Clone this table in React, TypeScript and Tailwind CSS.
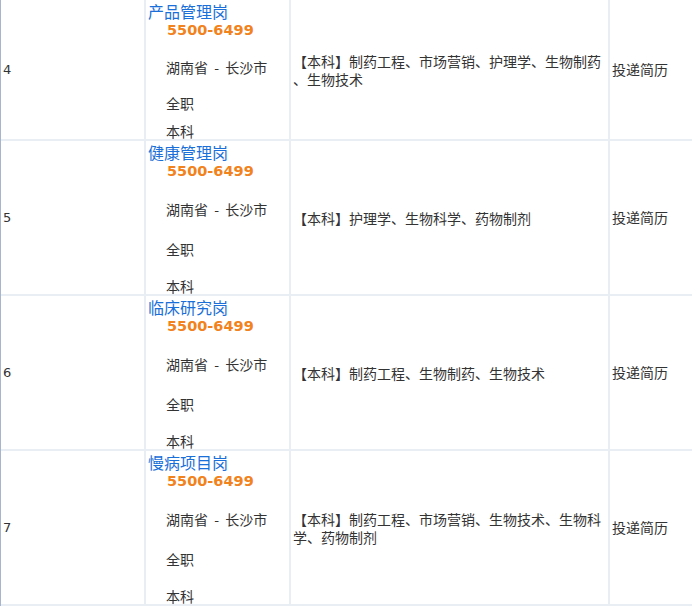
const jobs = [
  {
    no: 4,
    title: "产品管理岗",
    major: ["【本科】制药工程、市场营销、护理学、生物制药", "、生物技术"],
    // row 1 is cut short at the top of the shot, its lines sit tighter
    h: "h-[139px]",
    gaps: ["mt-0", "mt-[18px]", "mt-[17px]", "mt-[9px]"],
  },
  {
    no: 5,
    title: "健康管理岗",
    major: ["【本科】护理学、生物科学、药物制剂"],
    h: "h-[153px]",
    gaps: ["mt-0", "mt-[19px]", "mt-[21px]", "mt-[18px]"],
  },
  {
    no: 6,
    title: "临床研究岗",
    major: ["【本科】制药工程、生物制药、生物技术"],
    h: "h-[153px]",
    gaps: ["mt-0", "mt-[19px]", "mt-[21px]", "mt-[18px]"],
  },
  {
    no: 7,
    title: "慢病项目岗",
    major: ["【本科】制药工程、市场营销、生物技术、生物科", "学、药物制剂"],
    h: "h-[153px]",
    gaps: ["mt-0", "mt-[19px]", "mt-[21px]", "mt-[18px]"],
  },
];

const cjk = "font-['Noto_Sans_CJK_SC',sans-serif]";

export default function App() {
  return (
    <div className="w-[692px] h-[606px] overflow-hidden bg-white">
      <div className="flex flex-col gap-[2px] pb-[2px] bg-[#e9edf4] border-l border-[#a9b5cc] w-[780px]">
        {jobs.map((job) => (
          <div key={job.no} className={`flex gap-[2px] ${job.h}`}>
            {/* 序号 */}
            <div className="w-[143px] bg-white flex items-center pl-[2px] text-[13px] text-[#333] font-['DejaVu_Sans',sans-serif]">
              {job.no}
            </div>

            {/* 职位信息 */}
            <div className={`w-[143px] bg-white overflow-hidden pt-[2px] pl-[2px] ${cjk}`}>
              <div className="h-[19px] leading-[19px] text-[16px] text-[#1a6fd8] whitespace-nowrap">
                {job.title}
              </div>
              <div className={`${job.gaps[0]} h-[19px] leading-[19px] pl-[19px] text-[14.5px] font-bold text-[#f2821c] font-['DejaVu_Sans',sans-serif]`}>
                5500-6499
              </div>
              <div className={`${job.gaps[1]} h-[19px] leading-[19px] pl-[18px] text-[14px] text-[#333] whitespace-nowrap`}>
                湖南省<span className="mx-[3px]"> - </span>长沙市
              </div>
              <div className={`${job.gaps[2]} h-[19px] leading-[19px] pl-[18px] text-[14px] text-[#333]`}>
                全职
              </div>
              <div className={`${job.gaps[3]} h-[19px] leading-[19px] pl-[18px] text-[14px] text-[#333]`}>
                本科
              </div>
            </div>

            {/* 专业要求 */}
            <div className={`w-[317px] bg-white flex flex-col justify-center pl-[2px] text-[14px] leading-[18px] text-[#333] ${cjk}`}>
              {job.major.map((line) => (
                <div key={line} className="whitespace-nowrap">
                  {line}
                </div>
              ))}
            </div>

            {/* 操作 */}
            <div className={`flex-1 bg-white flex items-center pl-[2px] text-[14px] text-[#333] ${cjk}`}>
              投递简历
            </div>
          </div>
        ))}
      </div>
    </div>
  );
}
